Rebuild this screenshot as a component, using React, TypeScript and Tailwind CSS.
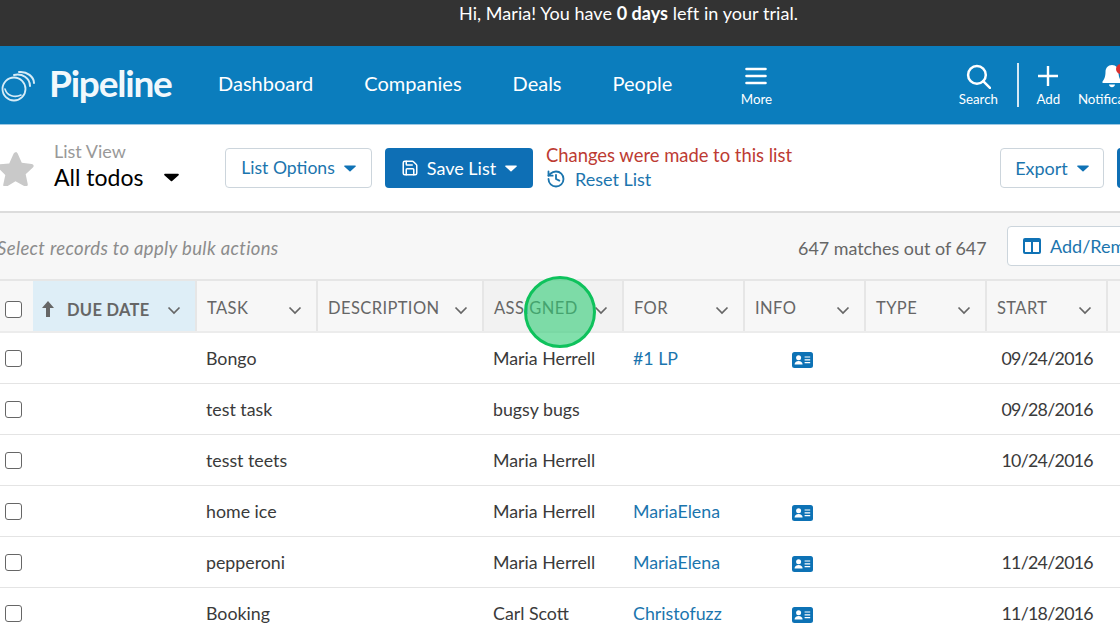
import { Save, History } from "lucide-react";

const grid = "grid grid-cols-[33px_164px_121px_166px_140px_121px_121px_121px_121px_40px]";
const fontStack = { fontFamily: "Lato, 'Liberation Sans', sans-serif" };

function Caret({ className }: { className: string }) {
  return (
    <svg viewBox="0 0 12 7" className={className} fill="currentColor">
      <path d="M0.8 0.5h10.4c.6 0 .9.7.5 1.1L6.5 6.3c-.3.3-.7.3-1 0L.3 1.6C-.1 1.2.2.5.8.5z" />
    </svg>
  );
}

function Chevron({ className }: { className: string }) {
  return (
    <svg viewBox="0 0 14 9" className={`h-[9px] w-[14px] text-[#666] ${className}`} fill="none" stroke="currentColor" strokeWidth="1.7">
      <path d="M1.500 1.500 7 7l5.500-5.500" />
    </svg>
  );
}

function Checkbox() {
  return <div className="ml-[5px] h-[17px] w-[17px] rounded-[3px] border-[1.5px] border-[#666] bg-white" />;
}

function ContactCard() {
  return (
    <svg viewBox="0 0 21 16" className="ml-[47px] mt-[3px] h-[16px] w-[21px]">
      <rect width="21" height="16" rx="2.5" fill="#0d72b5" />
      <circle cx="6.6" cy="5.7" r="2.5" fill="#fff" />
      <path d="M2.6 12.6c0-2.6 1.7-3.7 4-3.7s4 1.100 4 3.700z" fill="#fff" />
      <path d="M12.6 5h5.600M12.6 7.800h5.600M12.6 10.600h5.600" stroke="#fff" strokeWidth="1.2" />
    </svg>
  );
}

function HeaderCell({ label, hover }: { label: string; hover?: boolean }) {
  return (
    <div className={`flex items-center justify-between border-r-2 border-[#e6e6e6] pl-[10px] pr-[14px] pt-[4px] ${hover ? "bg-[#f2f2f2]" : ""}`}>
      <span className="mt-[1px] text-[16.5px] tracking-[0.4px] text-[#666]">{label}</span>
      <Chevron className="mt-[4px]" />
    </div>
  );
}

function NavAction({ label, children, className }: { label: string; children: React.ReactNode; className: string }) {
  return (
    <div className={`flex shrink-0 flex-col items-center ${className}`}>
      <div className="flex h-[26px] items-center">{children}</div>
      <span className="mt-[2px] whitespace-nowrap text-[13.3px] leading-[16px] text-white">{label}</span>
    </div>
  );
}

const rows = [
  { task: "Bongo", who: "Maria Herrell", forName: "#1 LP", info: true, start: "09/24/2016" },
  { task: "test task", who: "bugsy bugs", forName: "", info: false, start: "09/28/2016" },
  { task: "tesst teets", who: "Maria Herrell", forName: "", info: false, start: "10/24/2016" },
  { task: "home ice", who: "Maria Herrell", forName: "MariaElena", info: true, start: "" },
  { task: "pepperoni", who: "Maria Herrell", forName: "MariaElena", info: true, start: "11/24/2016" },
  { task: "Booking", who: "Carl Scott", forName: "Christofuzz", info: true, start: "11/18/2016" },
];

export default function App() {
  return (
    <div style={fontStack} className="relative h-[626px] w-[1120px] overflow-hidden bg-white">
      {/* trial banner */}
      <div className="h-[46px] bg-[#333333] pt-[2px] pl-[459px] text-[18px] leading-[22px] tracking-[0.05px] text-white">
        Hi, Maria! You have <b>0 days</b> left in your trial.
      </div>

      {/* main nav */}
      <div className="flex h-[79px] items-center overflow-hidden border-b border-[#9cc8e3] bg-[#0b7dbd]">
        <svg viewBox="0 0 36 36" className="ml-0 mt-[-1px] h-[36px] w-[36px] shrink-0" fill="none" stroke="#d7ecf7" strokeLinecap="round">
          <circle cx="14" cy="22" r="11.500" strokeWidth="1.8" />
          <path d="M14 8C22 6 30 11 30 19" strokeWidth="2" />
          <path d="M19 5C27 4 34 10 34 16" strokeWidth="2" />
          <path d="M5 22C7 29 15 31 21 28" strokeWidth="1.6" />
        </svg>
        <span className="ml-[13px] mr-[2px] mt-[-6px] w-[121px] shrink-0 text-[37px] font-bold leading-none tracking-[-1.2px] text-[#f1f8fc]">Pipeline</span>
        <div className="ml-[46px] mt-[-5px] flex shrink-0 gap-[51px] text-[20px] text-white">
          <span>Dashboard</span>
          <span>Companies</span>
          <span>Deals</span>
          <span>People</span>
        </div>
        <NavAction label="More" className="ml-[68px] w-[32px]">
          <svg viewBox="0 0 22 18" className="h-[18px] w-[22px]" stroke="#fff" strokeWidth="2.6" strokeLinecap="round">
            <path d="M1.500 2h19M1.500 9h19M1.500 16h19" />
          </svg>
        </NavAction>
        <NavAction label="Search" className="ml-[183px] w-[46px]">
          <svg viewBox="0 0 24 24" className="h-[25px] w-[25px]" fill="none" stroke="#fff" strokeWidth="2.4" strokeLinecap="round">
            <circle cx="10.5" cy="10.5" r="8.5" />
            <path d="m16.500 16.500 6.500 6.500" />
          </svg>
        </NavAction>
        <div className="ml-[16px] h-[44px] w-[2px] shrink-0 bg-[#d5e9f5]" />
        <NavAction label="Add" className="ml-[16px] w-[26px]">
          <svg viewBox="0 0 20 20" className="h-[20px] w-[20px]" stroke="#fff" strokeWidth="2.4">
            <path d="M10 0v20M0 10h20" />
          </svg>
        </NavAction>
        <NavAction label="Notifications" className="ml-[16px] w-[76px]">
          <div className="relative mr-[6px]">
            <svg viewBox="0 0 20 24" className="h-[24px] w-[20px]" fill="#fff">
              <path d="M10 1c-4 0-6.500 3-6.500 7 0 5-1.500 7.500-3 9.500v1.500h19v-1.500c-1.500-2-3-4.500-3-9.500 0-4-2.500-7-6.500-7zM7 20.500c.3 1.700 1.500 2.800 3 2.800s2.700-1.100 3-2.800z" />
            </svg>
            <div className="absolute right-[-4px] top-0 h-[10px] w-[10px] rounded-full bg-[#d8312f]" />
          </div>
        </NavAction>
      </div>

      {/* list toolbar */}
      <div className="flex h-[88px] items-center border-b-2 border-[#dcdcdc]">
        <svg viewBox="0 0 36 34" className="ml-[-3px] h-[36px] w-[37px] shrink-0" fill="#c9c9c9">
          <path d="M18 1.500c1 0 1.700.6 2.100 1.500l4 9 9.600 1c2 .2 2.600 2.300 1.200 3.600l-7 6.600 2 9.400c.4 1.900-1.400 3.100-3 2.200L18 30l-8.900 5.300c-1.600.9-3.400-.3-3-2.200l2-9.400-7-6.600C-.3 15.800.3 13.700 2.300 13.500l9.600-1 4-9c.4-.9 1.100-1.500 2.100-1.500z" />
        </svg>
        <div className="ml-[20px] mt-[-2px] w-[171px] shrink-0">
          <div className="text-[18px] leading-[20px] text-[#999]">List View</div>
          <div className="flex items-center text-[23px] leading-[32px] text-black">
            All todos
            <Caret className="ml-[21px] h-[9px] w-[15px] text-black" />
          </div>
        </div>
        <button className="flex h-[40px] w-[147px] shrink-0 items-center justify-center gap-[9px] rounded-[4px] border-[1.5px] border-[#ccd5dc] bg-white pt-[1px] text-[17.6px] text-[#1b75ae]">
          List Options
          <Caret className="h-[7px] w-[12px] text-[#0f72b5]" />
        </button>
        <button className="ml-[13px] flex h-[40px] w-[148px] shrink-0 items-center justify-center gap-[8px] rounded-[4px] bg-[#0e6fb5] text-[18px] text-white">
          <Save className="h-[18px] w-[18px]" strokeWidth={2} />
          Save List
          <Caret className="ml-[1px] h-[7px] w-[12px] text-white" />
        </button>
        <div className="ml-[13px] w-[454px] shrink-0">
          <div className="mt-[-1px] whitespace-nowrap text-[18.4px] leading-[22px] text-[#bd3b33]">Changes were made to this list</div>
          <div className="flex items-center gap-[9px] pt-[1px] text-[18px] leading-[24px] text-[#1b75ae]">
            <History className="h-[20px] w-[20px]" strokeWidth={2.2} />
            Reset List
          </div>
        </div>
        <button className="flex h-[40px] w-[104px] shrink-0 items-center justify-center gap-[9px] rounded-[4px] border-[1.5px] border-[#ccd5dc] bg-white text-[18px] text-[#1b75ae]">
          Export
          <Caret className="h-[7px] w-[12px] text-[#0f72b5]" />
        </button>
        <div className="ml-[13px] h-[40px] w-[20px] shrink-0 rounded-[4px] bg-[#0e6fb5]" />
      </div>

      {/* bulk actions */}
      <div className="flex h-[68px] items-center border-b-2 border-[#e6e6e6] bg-[#f7f7f7]">
        <span className="ml-[-3px] mt-[6px] w-[801px] shrink-0 text-[18.5px] italic tracking-[0.35px] text-[#8c8c8c]">Select records to apply bulk actions</span>
        <span className="mt-[4px] w-[209px] shrink-0 text-[17.9px] text-[#666]">647 matches out of 647</span>
        <button className="flex h-[40px] w-[140px] shrink-0 items-center gap-[9px] rounded-[4px] border-[1.5px] border-[#ccd5dc] bg-white pl-[15px] text-[18px] text-[#1b75ae]">
          <svg viewBox="0 0 18 16" className="h-[16px] w-[18px] shrink-0">
            <rect width="18" height="16" rx="2" fill="#0f72b5" />
            <rect x="2" y="4" width="6" height="10" fill="#fff" />
            <rect x="10" y="4" width="6" height="10" fill="#fff" />
          </svg>
          <span className="whitespace-nowrap">Add/Remove</span>
        </button>
      </div>

      {/* table header */}
      <div className={`${grid} h-[52px] border-b-2 border-[#ececec] bg-[#f7f7f7]`}>
        <div className="flex items-center pt-[6px]"><Checkbox /></div>
        <div className="flex items-center justify-between border-r-2 border-[#e6e6e6] bg-[#deeef7] pl-[9px] pr-[14px]">
          <div className="flex items-center gap-[13px]">
            <svg viewBox="0 0 12 16" className="mt-[5px] h-[16px] w-[12px]" fill="#666">
              <path d="M6 0 12 7H8v9H4V7H0z" />
            </svg>
            <span className="mt-[8px] text-[16.5px] font-bold tracking-[0.3px] text-[#666]">DUE DATE</span>
          </div>
          <Chevron className="mt-[8px]" />
        </div>
        <HeaderCell label="TASK" />
        <HeaderCell label="DESCRIPTION" />
        <HeaderCell label="ASSIGNED" hover />
        <HeaderCell label="FOR" />
        <HeaderCell label="INFO" />
        <HeaderCell label="TYPE" />
        <HeaderCell label="START" />
        <div />
      </div>

      {/* table rows */}
      {rows.map((row) => (
        <div key={row.task} className={`${grid} h-[51px] items-center border-b border-[#e4e4e4] pt-[1px] text-[17.8px] text-[#3a3a3a]`}>
          <Checkbox />
          <div />
          <div className="pl-[9px]">{row.task}</div>
          <div />
          <div className="pl-[9px]">{row.who}</div>
          <div className="pl-[9px] text-[#1b75ae]">{row.forName}</div>
          <div>{row.info && <ContactCard />}</div>
          <div />
          <div className="pr-[15px] text-right tracking-[-0.7px]">{row.start}</div>
          <div />
        </div>
      ))}

      {/* click marker from the recording */}
      <div className="absolute left-[524px] top-[276px] h-[72px] w-[72px] rounded-full border-[3.5px] border-[#0ec25c] bg-[#2ecb75]/60" />
    </div>
  );
}
